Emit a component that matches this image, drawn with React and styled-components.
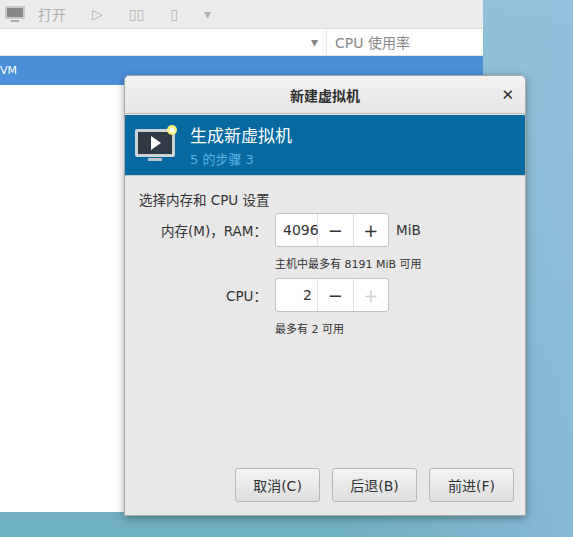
import styled, { createGlobalStyle } from "styled-components";

const Global = createGlobalStyle`
  body { margin: 0; font-family: "DejaVu Sans", "Noto Sans CJK SC", sans-serif; }
`;

const Desktop = styled.div`
  position: relative;
  width: 573px;
  height: 537px;
  overflow: hidden;
  background: linear-gradient(180deg, #8fc3cf 0%, #7ab7c6 60%, #6fb0c0 100%);
  &::after {
    content: "";
    position: absolute;
    inset: 0;
    background: linear-gradient(90deg, rgba(255,255,255,0) 60%, rgba(150,190,230,0.6) 100%);
  }
`;

const MainWin = styled.div`
  position: absolute;
  left: 0;
  top: 0;
  width: 483px;
  height: 512px;
  background: #fff;
  z-index: 1;
  display: flex;
  flex-direction: column;
`;

const Toolbar = styled.div`
  height: 28px;
  background: #ececec;
  border-bottom: 1px solid #dcdcdc;
  display: flex;
  align-items: center;
  gap: 26px;
  padding-left: 4px;
  color: #b0b0b0;
  font-size: 14px;
`;

const HeaderRow = styled.div`
  height: 26px;
  display: flex;
  border-bottom: 1px solid #e4e4e4;
`;

const HeaderCell = styled.div`
  flex: ${p => (p.$grow ? 1 : "none")};
  width: ${p => (p.$grow ? "auto" : "140px")};
  display: flex;
  align-items: center;
  justify-content: ${p => (p.$grow ? "flex-end" : "flex-start")};
  padding: 0 8px;
  color: #888;
  font-size: 14px;
  border-left: ${p => (p.$grow ? "none" : "1px solid #e8e8e8")};
`;

const SelRow = styled.div`
  height: 29px;
  background: #4a90d9;
  color: #fff;
  font-size: 11px;
  display: flex;
  align-items: center;
`;

const Dialog = styled.div`
  position: absolute;
  left: 124px;
  top: 75px;
  width: 400px;
  height: 439px;
  background: #e8e8e8;
  border: 1px solid #a9a9a9;
  border-radius: 5px 5px 0 0;
  box-shadow: 0 2px 8px rgba(0,0,0,0.35);
  z-index: 2;
  display: flex;
  flex-direction: column;
`;

const TitleBar = styled.div`
  height: 37px;
  display: flex;
  align-items: center;
  justify-content: center;
  position: relative;
  font-size: 14px;
  font-weight: bold;
  color: #2e2e2e;
  background: linear-gradient(#f2f2f2, #e6e6e6);
  border-bottom: 1px solid #bdbdbd;
  border-radius: 5px 5px 0 0;
`;

const Close = styled.span`
  position: absolute;
  right: 11px;
  top: 10px;
  font-size: 15px;
  font-weight: bold;
`;

const Banner = styled.div`
  height: 60px;
  margin: 1px 0 0;
  background: #06699f;
  border-bottom: 1px solid #c6c6c6;
  display: flex;
  align-items: center;
  gap: 10px;
  padding-left: 9px;
`;

const BannerText = styled.div`
  display: flex;
  flex-direction: column;
  gap: 2px;
`;

const BannerTitle = styled.div`
  color: #fff;
  font-size: 17px;
`;

const BannerSub = styled.div`
  color: #5cb6e6;
  font-size: 13px;
`;

const Body = styled.div`
  flex: 1;
  padding: 13px 14px 0;
  display: flex;
  flex-direction: column;
  font-size: 13.5px;
  color: #333;
`;

const Grid = styled.div`
  display: grid;
  grid-template-columns: 138px auto;
  column-gap: 8px;
  align-items: center;
  margin-top: 4px;
  margin-left: -10px;
`;

const Label = styled.div`
  text-align: right;
  font-size: 13.5px;
`;

const SpinRow = styled.div`
  display: flex;
  align-items: center;
  gap: 7px;
`;

const Spin = styled.div`
  display: flex;
  height: 32px;
  width: 112px;
  border: 1px solid #c3c3c3;
  border-radius: 3px;
  background: #fff;
`;

const SpinValue = styled.div`
  width: 42px;
  display: flex;
  align-items: center;
  justify-content: ${p => p.$align};
  padding: 0 5px 0 7px;
  font-size: 14px;
  box-sizing: border-box;
  border-right: 1px solid #e2e2e2;
`;

const SpinBtn = styled.div`
  flex: 1;
  display: flex;
  align-items: center;
  justify-content: center;
  font-size: 18px;
  color: ${p => (p.$disabled ? "#d0d0d0" : "#333")};
  border-left: ${p => (p.$first ? "none" : "1px solid #e2e2e2")};
`;

const Hint = styled.div`
  grid-column: 2;
  font-size: 11px;
  margin: 8px 0 7px;
`;

const Footer = styled.div`
  margin-top: auto;
  display: flex;
  justify-content: flex-end;
  gap: 12px;
  padding: 0 11px 13px 0;
`;

const Button = styled.button`
  width: 85px;
  height: 34px;
  border: 1px solid #b6b6b6;
  border-radius: 3px;
  background: linear-gradient(#f4f4f4, #dedede);
  font-family: inherit;
  font-size: 14px;
  color: #333;
`;

function MonitorIcon() {
  return (
    <svg width="46" height="42" viewBox="0 0 46 42">
      <rect x="1" y="5" width="40" height="28" rx="2" fill="#cfd3d6" />
      <rect x="4" y="8" width="34" height="22" fill="#2f3a44" />
      <polygon points="17,12 17,26 27,19" fill="#fff" />
      <rect x="14" y="34" width="14" height="3" fill="#bfc3c6" />
      <circle cx="38" cy="6" r="5" fill="#f6f27a" />
      <circle cx="38" cy="6" r="2.5" fill="#fff" />
    </svg>
  );
}

export default function App() {
  return (
    <Desktop>
      <Global />
      <MainWin>
        <Toolbar>
          <svg width="22" height="20" viewBox="0 0 22 20"><rect x="1" y="2" width="20" height="13" fill="#c8c8c8" /><rect x="3" y="4" width="16" height="9" fill="#888" /><rect x="7" y="16" width="8" height="2" fill="#aaa" /></svg>
          <span style={{ marginLeft: -14 }}>打开</span>
          <span>▷</span>
          <span>▯▯</span>
          <span>▯</span>
          <span>▾</span>
        </Toolbar>
        <HeaderRow>
          <HeaderCell $grow>▾</HeaderCell>
          <HeaderCell>CPU 使用率</HeaderCell>
        </HeaderRow>
        <SelRow>VM</SelRow>
      </MainWin>
      <Dialog>
        <TitleBar>
          新建虚拟机
          <Close>✕</Close>
        </TitleBar>
        <Banner>
          <MonitorIcon />
          <BannerText>
            <BannerTitle>生成新虚拟机</BannerTitle>
            <BannerSub>5 的步骤 3</BannerSub>
          </BannerText>
        </Banner>
        <Body>
          <div>选择内存和 CPU 设置</div>
          <Grid>
            <Label>内存(M)，RAM：</Label>
            <SpinRow>
              <Spin>
                <SpinValue $align="flex-start">4096</SpinValue>
                <SpinBtn $first>−</SpinBtn>
                <SpinBtn>+</SpinBtn>
              </Spin>
              MiB
            </SpinRow>
            <Hint>主机中最多有 8191 MiB 可用</Hint>
            <Label>CPU：</Label>
            <SpinRow>
              <Spin>
                <SpinValue $align="flex-end">2</SpinValue>
                <SpinBtn $first>−</SpinBtn>
                <SpinBtn $disabled>+</SpinBtn>
              </Spin>
            </SpinRow>
            <Hint>最多有 2 可用</Hint>
          </Grid>
        </Body>
        <Footer>
          <Button>取消(C)</Button>
          <Button>后退(B)</Button>
          <Button>前进(F)</Button>
        </Footer>
      </Dialog>
    </Desktop>
  );
}
